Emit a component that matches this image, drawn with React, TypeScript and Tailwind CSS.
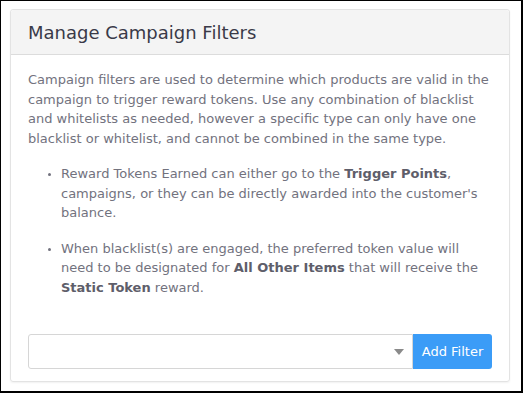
export default function App() {
  return (
    <div
      className="w-[523px] h-[393px] bg-white border-t border-l border-r-2 border-b-2 border-black pl-[9px] pt-[8px]"
      style={{ fontFamily: '"DejaVu Sans", "Open Sans", sans-serif' }}
    >
      <div className="w-[500px] h-[373px] border border-[#e3e3e3] rounded-[3px] shadow-[0_1px_2px_rgba(0,0,0,0.06)] flex flex-col">
        <div className="h-[45px] bg-[#f4f4f4] border-b border-[#dcdcdc] flex items-center px-[17px] rounded-t-[3px]">
          <h1 className="text-[18px] text-[#3a3a48]">Manage Campaign Filters</h1>
        </div>

        <div className="px-[17px] pt-[15px] text-[13px] leading-[19.5px] text-[#72727e]">
          <p>
            Campaign filters are used to determine which products are valid in the campaign to
            trigger reward tokens. Use any combination of blacklist and whitelists as needed,
            however a specific type can only have one blacklist or whitelist, and cannot be
            combined in the same type.
          </p>

          <ul className="list-disc pl-[33px] mt-[16px] space-y-[16px] marker:text-[10px]">
            <li>
              Reward Tokens Earned can either go to the{" "}
              <b className="font-semibold text-[#5e5e6a]">Trigger Points</b>, campaigns, or they
              can be directly awarded into the customer's balance.
            </li>
            <li>
              When blacklist(s) are engaged, the preferred token value will need to be
              designated for <b className="font-semibold text-[#5e5e6a]">All Other Items</b> that
              will receive the <b className="font-semibold text-[#5e5e6a]">Static Token</b> reward.
            </li>
          </ul>

          <div className="flex mt-[37px] h-[35px]">
            <div className="flex-1 border border-[#d6d6d6] rounded-l-[3px] flex items-center justify-end pr-[8px]">
              <svg width="10" height="6" viewBox="0 0 10 6">
                <path d="M0 0h10L5 6z" fill="#8a8a8a" />
              </svg>
            </div>
            <button className="w-[79px] bg-[#3b9cf7] text-white text-[13px] rounded-r-[3px]">
              Add Filter
            </button>
          </div>
        </div>
      </div>
    </div>
  );
}
